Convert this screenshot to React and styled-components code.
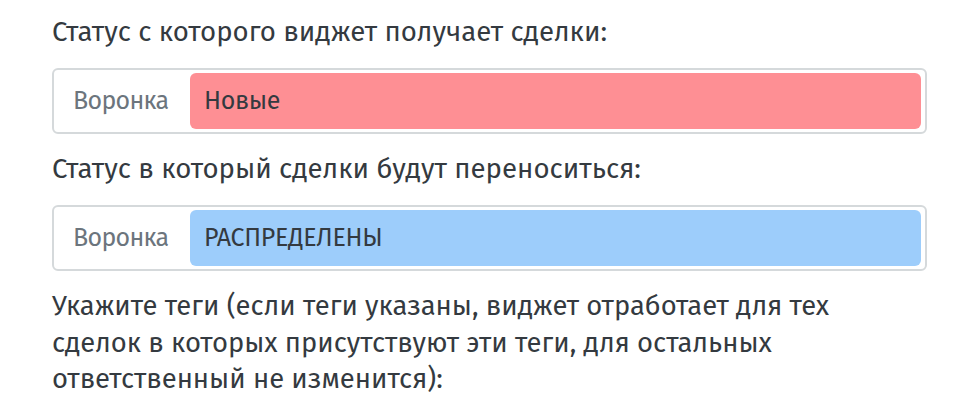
import React from 'react';
import styled, { createGlobalStyle } from 'styled-components';

const GlobalStyle = createGlobalStyle`
  body {
    margin: 0;
    background: #fff;
    font-family: "Fira Sans", "Noto Sans", "Open Sans", sans-serif;
    color: #343a40;
  }
`;

const statuses = [
  { label: 'Статус с которого виджет получает сделки:', value: 'Новые', color: '#fe8f94' },
  { label: 'Статус в который сделки будут переноситься:', value: 'РАСПРЕДЕЛЕНЫ', color: '#9dcdfb' },
];

function App() {
  return (
    <>
      <GlobalStyle />
      <Container>
        {statuses.map((s) => (
          <Field key={s.label}>
            <Label>{s.label}</Label>
            <Select>
              <Prefix>Воронка</Prefix>
              <Status color={s.color}>{s.value}</Status>
            </Select>
          </Field>
        ))}
        <Hint>
          Укажите теги (если теги указаны, виджет отработает для тех<br />
          сделок в которых присутствуют эти теги, для остальных<br />
          ответственный не изменится):
        </Hint>
      </Container>
    </>
  );
}

export default App;

const Container = styled.div`
  width: 875px;
  padding: 14px 0 0 52px;
  font-size: 27.4px;
  line-height: 36px;
`;

const Field = styled.div`
  margin-bottom: 17px;
`;

const Label = styled.div`
  margin-bottom: 18px;
  font-size: 27.6px;
`;

const Select = styled.div`
  display: flex;
  align-items: stretch;
  border: 2px solid #d5d9db;
  border-radius: 6px;
  padding: 3px 4px 3px 0;
  height: 56px;
  font-size: 25px;
`;

const Prefix = styled.span`
  display: flex;
  align-items: center;
  box-sizing: border-box;
  width: 136px;
  padding-left: 19px;
  color: #6c757d;
  letter-spacing: -0.7px;
`;

const Status = styled.div`
  flex: 1;
  display: flex;
  align-items: center;
  padding-left: 14px;
  background: ${(p) => p.color};
  border-radius: 6px;
  letter-spacing: -0.3px;
`;

const Hint = styled.p`
  margin: 0;
  line-height: 36.5px;
`;
